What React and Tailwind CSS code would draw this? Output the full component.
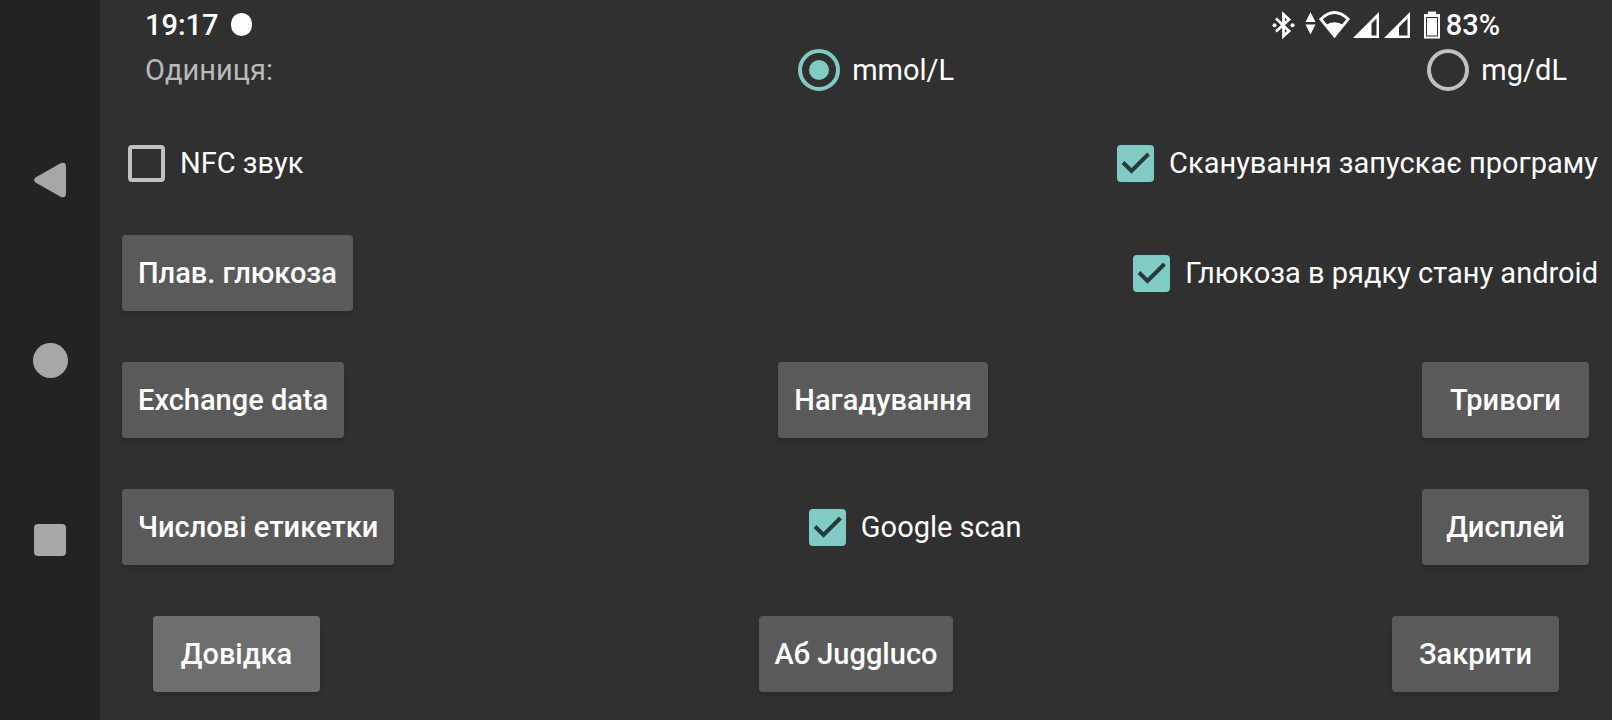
import { useState } from 'react';

function NavigationBar() {
  return (
    <nav className="w-[100px] shrink-0 py-[90px] flex flex-col bg-[#212423] text-[#a5a8a7]">
      <button type="button" aria-label="Назад" className="flex-1 grid place-items-center">
        <svg viewBox="0 0 36 38" className="w-9 h-[38px]" fill="currentColor">
          <path d="M28.5 2.3 3.5 16.6Q.5 19 3.5 21.4L28.5 35.7Q34 37.8 34 32V6Q34 .2 28.5 2.3Z" />
        </svg>
      </button>
      <button type="button" aria-label="Додому" className="flex-1 grid place-items-center">
        <span className="w-[35px] h-[35px] rounded-full bg-current" />
      </button>
      <button type="button" aria-label="Огляд" className="flex-1 grid place-items-center">
        <span className="w-8 h-8 rounded bg-current" />
      </button>
    </nav>
  );
}

function StatusBar() {
  return (
    <header className="h-[49px] pl-[45px] pr-[112px] flex items-center justify-between text-white font-medium">
      <div className="flex items-center gap-3">
        <span>19:17</span>
        <span className="w-[21px] h-[23px] rounded-full bg-white" />
      </div>
      <div className="flex items-center gap-1">
        <svg viewBox="0 0 172 30" className="w-[172px] h-[30px]" fill="currentColor">
          {/* Bluetooth */}
          <path
            d="M6 8.500 19 21 13.500 26V4.500L19 9.500 6 21.500"
            fill="none"
            stroke="currentColor"
            strokeWidth="2.8"
          />
          <circle cx="4.500" cy="15.300" r="2" />
          <circle cx="22.500" cy="15.300" r="2" />
          {/* Data arrows */}
          <path d="M40.500 2 45.500 12h-10zM40.500 24.500 45.500 14.500h-10z" />
          {/* Wi-Fi */}
          <path
            d="M50.800 9.200Q64.500 -4 78.200 9.200L64.500 26Z"
            fill="none"
            stroke="currentColor"
            strokeWidth="2.800"
          />
          <path d="M55.500 15Q64.500 9.500 73.500 15L64.500 27Z" />
          {/* Signals */}
          <path d="M109 2V28H83ZM106.500 8.500 101.500 13.500V25.500H106.500Z" fillRule="evenodd" />
          <path d="M140 2V28H114ZM137.500 8.500 129 17V25.500H137.500Z" fillRule="evenodd" />
          {/* Battery */}
          <path d="M158 1.500h8v2.500h4V28.500h-16V4h4ZM156 7V26.500H168V7Z" fillRule="evenodd" />
          <path d="M157 8h10v17.500h-10z" />
        </svg>
        <span>83%</span>
      </div>
    </header>
  );
}

function CheckOption({ label, defaultChecked = false }) {
  const [checked, setChecked] = useState(defaultChecked);

  return (
    <label className="flex items-center gap-[15px] pl-[14px] whitespace-nowrap">
      <span className="grid w-[37px] h-[37px]">
        <input
          type="checkbox"
          checked={checked}
          onChange={(e) => setChecked(e.target.checked)}
          className="col-start-1 row-start-1 appearance-none rounded border-4 border-[#c1c1c1] checked:border-[#80cbc4] checked:bg-[#80cbc4]"
        />
        {checked && (
          <svg
            viewBox="0 0 37 37"
            className="col-start-1 row-start-1 pointer-events-none"
            fill="none"
            stroke="#263b39"
            strokeWidth="4"
          >
            <path d="M6 17.500 14.500 26 31.500 9" />
          </svg>
        )}
      </span>
      {label}
    </label>
  );
}

function UnitOption({ label, value, unit, onSelect }) {
  return (
    <label className="flex items-center gap-3 pl-3 whitespace-nowrap">
      <span className="grid w-[42px] h-[42px]">
        <input
          type="radio"
          name="unit"
          value={value}
          checked={unit === value}
          onChange={() => onSelect(value)}
          className="col-start-1 row-start-1 appearance-none rounded-full border-4 border-[#c1c1c1] checked:border-[#80cbc4]"
        />
        {unit === value && (
          <span className="col-start-1 row-start-1 place-self-center w-5 h-5 rounded-full bg-[#80cbc4] pointer-events-none" />
        )}
      </span>
      {label}
    </label>
  );
}

function Button({ children, focused }) {
  return (
    <button
      type="button"
      className={`h-[76px] min-w-[167px] px-4 rounded-sm font-medium whitespace-nowrap shadow-md ${
        focused ? 'bg-[#6e6e6e]' : 'bg-[#5a5a5a]'
      }`}
    >
      {children}
    </button>
  );
}

export default function App() {
  const [unit, setUnit] = useState('mmol');

  return (
    <div className="min-h-screen flex bg-[#303030] text-white text-[29px] leading-9 font-[Roboto,sans-serif]">
      <NavigationBar />
      <div className="flex-1 min-w-0 flex flex-col">
        <StatusBar />
        <main className="flex flex-col gap-[51px] pb-7">
          <div
            role="radiogroup"
            aria-labelledby="unit-label"
            className="h-[42px] px-[45px] flex items-center justify-between"
          >
            <span id="unit-label" className="pr-[52px] text-[#bababa]">
              Одиниця:
            </span>
            <UnitOption label="mmol/L" value="mmol" unit={unit} onSelect={setUnit} />
            <UnitOption label="mg/dL" value="mg" unit={unit} onSelect={setUnit} />
          </div>

          <div className="h-[42px] px-[14px] flex items-center justify-between">
            <CheckOption label="NFC звук" />
            <CheckOption label="Сканування запускає програму" defaultChecked />
          </div>

          <div className="pl-[22px] pr-[14px] flex items-center justify-between">
            <Button>Плав. глюкоза</Button>
            <CheckOption label="Глюкоза в рядку стану android" defaultChecked />
          </div>

          <div className="pl-[22px] pr-[23px] flex items-center justify-between">
            <Button>Exchange data</Button>
            <Button>Нагадування</Button>
            <Button>Тривоги</Button>
          </div>

          <div className="pl-[22px] pr-[23px] flex items-center justify-between">
            <Button>Числові етикетки</Button>
            <CheckOption label="Google scan" defaultChecked />
            <Button>Дисплей</Button>
          </div>

          <div className="px-[53px] flex items-center justify-between">
            <Button focused>Довідка</Button>
            <Button>Аб Juggluco</Button>
            <Button>Закрити</Button>
          </div>
        </main>
      </div>
    </div>
  );
}
